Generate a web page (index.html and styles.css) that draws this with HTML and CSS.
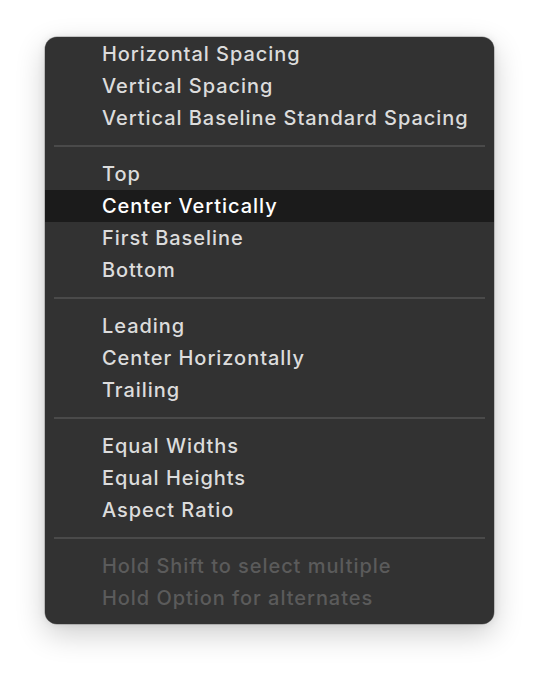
FILE: index.html
```html
<!DOCTYPE html>
<html>
<head>
<meta charset="utf-8">
<link rel="stylesheet" href="styles.css">
</head>
<body>
<div class="menu">
  <div class="item">Horizontal Spacing</div>
  <div class="item">Vertical Spacing</div>
  <div class="item">Vertical Baseline Standard Spacing</div>
  <div class="sep"></div>
  <div class="item">Top</div>
  <div class="item active">Center Vertically</div>
  <div class="item">First Baseline</div>
  <div class="item">Bottom</div>
  <div class="sep"></div>
  <div class="item">Leading</div>
  <div class="item">Center Horizontally</div>
  <div class="item">Trailing</div>
  <div class="sep"></div>
  <div class="item">Equal Widths</div>
  <div class="item">Equal Heights</div>
  <div class="item">Aspect Ratio</div>
  <div class="sep"></div>
  <div class="item disabled">Hold Shift to select multiple</div>
  <div class="item disabled">Hold Option for alternates</div>
</div>
</body>
</html>
```
FILE: styles.css
```css
html, body {
  margin: 0;
  padding: 0;
  background: #ffffff;
}
body {
  width: 540px;
  height: 678px;
  padding-top: 37px;
  padding-left: 45px;
  box-sizing: border-box;
  font-family: "Inter", "Noto Sans", sans-serif;
}
.menu {
  width: 449px;
  box-sizing: border-box;
  padding: 1px 0 10px;
  background: #323232;
  border-radius: 12px;
  box-shadow: 0 0 0 0.5px rgba(0,0,0,0.35), 0 10px 30px rgba(0,0,0,0.2), 0 0 8px rgba(0,0,0,0.08);
}
.item {
  height: 32px;
  line-height: 32px;
  padding-left: 57px;
  font-size: 20px;
  font-weight: 500;
  letter-spacing: 0.95px;
  color: #dcdcdc;
  white-space: nowrap;
}
.item.active {
  background: #1b1b1b;
  color: #ffffff;
}
.item.disabled {
  color: #5b5b5b;
}
.sep {
  height: 24px;
  display: flex;
  align-items: center;
  padding: 0 9px;
}
.sep::before {
  content: "";
  display: block;
  flex: 1;
  height: 2px;
  background: #4a4a4a;
}
```
